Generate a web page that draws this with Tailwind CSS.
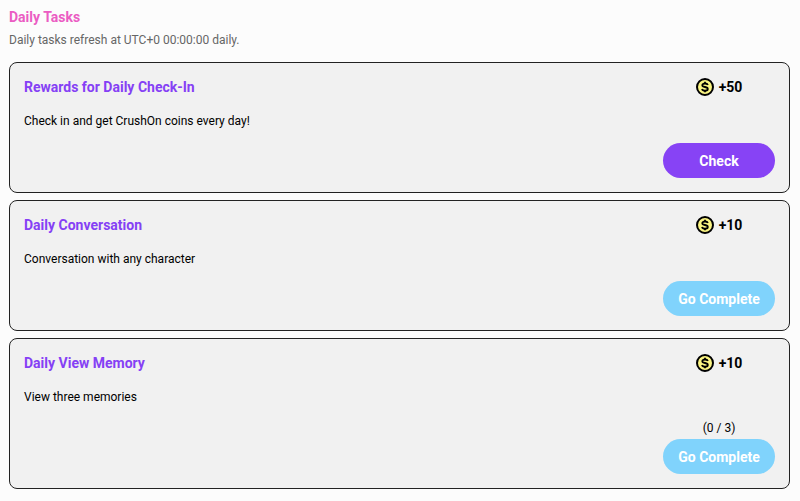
<!DOCTYPE html>
<html lang="en">
<head>
    <meta charset="UTF-8">
    <meta name="viewport" content="width=device-width, initial-scale=1.0">
    <title>Daily Tasks</title>
    <script src="https://cdn.jsdelivr.net/npm/@tailwindcss/browser@4"></script>
</head>
<body class="bg-[#fcfcfc] font-['Roboto',sans-serif] text-black">
    <!-- coin icon, shared by all the cards -->
    <svg class="hidden">
        <symbol id="coin" viewBox="0 0 18 18">
            <circle cx="9" cy="9" r="8" fill="#fbf583" stroke="#000" stroke-width="2"/>
            <path d="M11.9 7C11.500 5.900 10.500 5.500 9 5.500c-1.600 0-2.700.6-2.700 1.700 0 2.500 5.500 1.100 5.500 3.700 0 1.100-1.100 1.700-2.800 1.700-1.600 0-2.700-.6-3-1.700M9 3.800v1.700M9 12.500v1.700" fill="none" stroke="#000" stroke-width="1.800"/>
        </symbol>
    </svg>
    <main class="pl-[9px] pr-[10px] pt-[7px]">
        <h1 class="text-sm font-bold text-[#eb5cc3]">Daily Tasks</h1>
        <p class="mt-1 text-xs leading-[18px] text-[#666]">Daily tasks refresh at UTC+0 00:00:00 daily.</p>
        <ul class="mt-[13px] flex flex-col gap-[7px]">
            <li class="flex justify-between rounded-lg border border-[#222] bg-[#f1f1f1] p-[14px]">
                <div>
                    <h2 class="text-sm font-bold text-[#8540f5]">Rewards for Daily Check-In</h2>
                    <p class="mt-[15px] text-xs leading-[18px]">Check in and get CrushOn coins every day!</p>
                </div>
                <div class="flex w-28 flex-col items-center">
                    <div class="flex items-center gap-[5px] text-sm font-bold">
                        <svg class="size-[18px]"><use href="#coin"/></svg>
                        <span>+50</span>
                    </div>
                    <button type="button" class="mt-[46px] h-[35px] w-full rounded-full bg-[#8743f5] text-sm font-bold text-white">Check</button>
                </div>
            </li>
            <li class="flex justify-between rounded-lg border border-[#222] bg-[#f1f1f1] p-[14px]">
                <div>
                    <h2 class="text-sm font-bold text-[#8540f5]">Daily Conversation</h2>
                    <p class="mt-[15px] text-xs leading-[18px]">Conversation with any character</p>
                </div>
                <div class="flex w-28 flex-col items-center">
                    <div class="flex items-center gap-[5px] text-sm font-bold">
                        <svg class="size-[18px]"><use href="#coin"/></svg>
                        <span>+10</span>
                    </div>
                    <button type="button" class="mt-[46px] h-[35px] w-full rounded-full bg-[#80d3fc] text-sm font-bold text-white">Go Complete</button>
                </div>
            </li>
            <li class="flex justify-between rounded-lg border border-[#222] bg-[#f1f1f1] p-[14px]">
                <div>
                    <h2 class="text-sm font-bold text-[#8540f5]">Daily View Memory</h2>
                    <p class="mt-[15px] text-xs leading-[18px]">View three memories</p>
                </div>
                <div class="flex w-28 flex-col items-center">
                    <div class="flex items-center gap-[5px] text-sm font-bold">
                        <svg class="size-[18px]"><use href="#coin"/></svg>
                        <span>+10</span>
                    </div>
                    <p class="mt-[46px] text-xs leading-[18px]">(0 / 3)</p>
                    <button type="button" class="mt-[2px] h-[35px] w-full rounded-full bg-[#80d3fc] text-sm font-bold text-white">Go Complete</button>
                </div>
            </li>
        </ul>
    </main>
</body>
</html>
